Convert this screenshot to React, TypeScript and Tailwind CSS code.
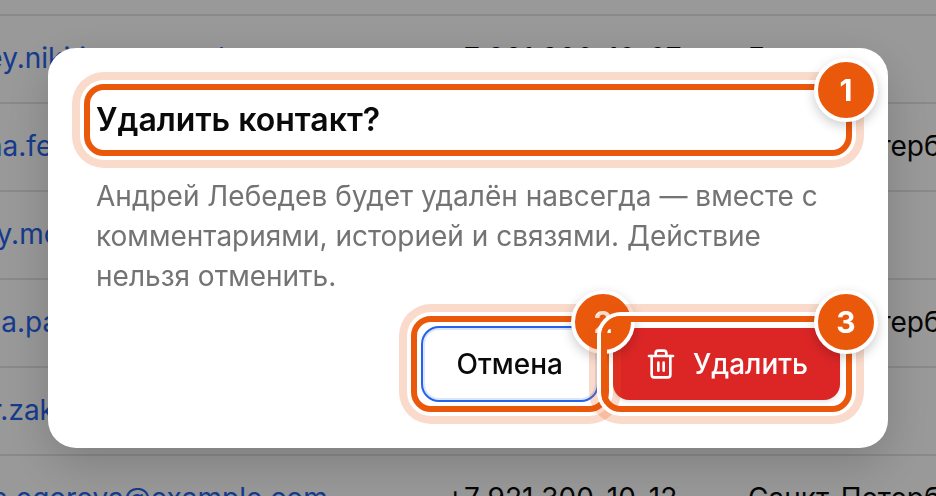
import React from "react";
import { Trash2 } from "lucide-react";

const contacts = [
  { email: "sergey.nikitin@example.com", phone: "+7 921 300-10-07", city: "Гатчина" },
  { email: "marina.fedorova@example.com", phone: "+7 921 300-10-08", city: "Санкт-Петербург" },
  { email: "dmitry.morozov@example.com", phone: "+7 921 300-10-09", city: "Казань" },
  { email: "tatiana.pavlova@example.com", phone: "+7 921 300-10-10", city: "Санкт-Петербург" },
  { email: "viktor.zakharov@example.com", phone: "+7 921 300-10-11", city: "Москва" },
  { email: "polina.egorova@example.com", phone: "+7 921 300-10-12", city: "Санкт-Петербург" },
];

// numbered frame around its parent, the parent has to be relative
const Callout = ({ number }: { number: number }) => (
  <span className="pointer-events-none absolute -inset-3 z-10 rounded-[20px] border-[6px] border-[#ea580c] shadow-[0_0_0_4px_#fff,0_0_0_12px_rgba(234,88,12,0.22)]">
    <span className="absolute -top-8 -right-8 flex h-16 w-16 items-center justify-center rounded-full border-4 border-white bg-[#ea580c] text-3xl leading-10 font-bold text-white shadow-[0_4px_12px_rgba(0,0,0,0.2)]">
      {number}
    </span>
  </span>
);

const ContactsTable = () => (
  <div className="overflow-hidden pt-3.5">
    <table className="-ml-[88px] w-[1200px] table-fixed border-t-2 border-[#e5e5e5] text-left text-[28px] leading-10 whitespace-nowrap">
      <colgroup>
        <col className="w-[518px]" />
        <col className="w-[302px]" />
        <col />
      </colgroup>
      <tbody>
        {contacts.map((contact) => (
          <tr key={contact.email} className="h-[88px] border-b-2 border-[#e5e5e5]">
            <td className="px-4 pb-0.5">
              <a href={`mailto:${contact.email}`} className="text-[#2563eb]">
                {contact.email}
              </a>
            </td>
            <td className="px-4 pb-0.5">{contact.phone}</td>
            <td className="px-4 pb-0.5">{contact.city}</td>
          </tr>
        ))}
      </tbody>
    </table>
  </div>
);

const DeleteDialog = () => (
  <div
    role="alertdialog"
    aria-modal="true"
    aria-labelledby="dialog-title"
    aria-describedby="dialog-text"
    className="flex w-full max-w-4xl flex-col gap-8 rounded-[28px] bg-white p-12 shadow-[0_16px_48px_rgba(0,0,0,0.18)]"
  >
    {/* TITLE */}
    <div className="relative">
      <h2 id="dialog-title" className="text-[32px] leading-12 font-semibold">
        Удалить контакт?
      </h2>
      <Callout number={1} />
    </div>
    {/* TEXT */}
    <p id="dialog-text" className="text-[28px] leading-10 text-[#737373]">
      Андрей Лебедев будет удалён навсегда — вместе с комментариями, историей
      и связями. Действие нельзя отменить.
    </p>
    {/* BUTTONS */}
    <div className="flex justify-end gap-4 text-[28px] leading-10 font-medium">
      <div className="relative">
        <button
          type="button"
          className="h-18 cursor-pointer rounded-2xl border-2 border-[#dbe5fb] bg-white px-8 ring-2 ring-[#2563eb]"
        >
          Отмена
        </button>
        <Callout number={2} />
      </div>
      <div className="relative">
        <button
          type="button"
          className="flex h-18 cursor-pointer items-center gap-4 rounded-2xl bg-[#dc2626] px-8 text-white shadow-[0_2px_4px_rgba(0,0,0,0.1)]"
        >
          <Trash2 className="h-8 w-8" strokeWidth={2} />
          Удалить
        </button>
        <Callout number={3} />
      </div>
    </div>
  </div>
);

const App = () => {
  return (
    <div className="h-screen overflow-hidden bg-white font-['Inter',sans-serif] text-[#0a0a0a]">
      <ContactsTable />
      <div className="fixed inset-0 flex items-center justify-center bg-black/40 p-12">
        <DeleteDialog />
      </div>
    </div>
  );
};

export default App;
